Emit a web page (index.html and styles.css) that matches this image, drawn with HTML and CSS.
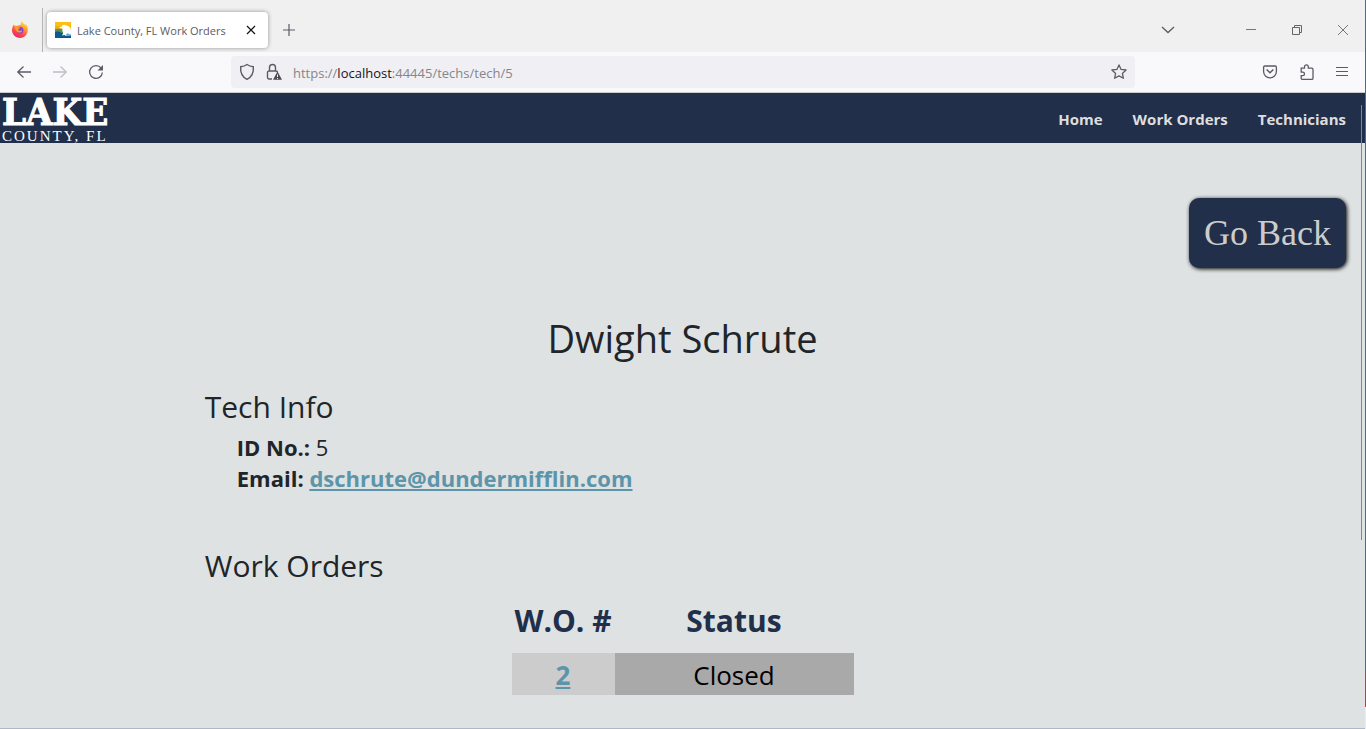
FILE: index.html
```html
<!DOCTYPE html>
<html lang="en">
<head>
<meta charset="utf-8">
<title>Lake County, FL Work Orders</title>
<link rel="stylesheet" href="styles.css">
</head>
<body>
<div class="window">
  <div class="tabstrip">
    <button class="firefox" aria-label="Firefox View">
      <svg width="18" height="18" viewBox="0 0 18 18">
        <defs>
          <linearGradient id="flame" x1=".8" y1="0" x2=".3" y2="1"><stop offset="0" stop-color="#fff04a"/><stop offset=".35" stop-color="#ffa526"/><stop offset=".7" stop-color="#ff4a45"/><stop offset="1" stop-color="#e81f78"/></linearGradient>
          <radialGradient id="globe"><stop offset="0" stop-color="#5b4fe0"/><stop offset="1" stop-color="#a33ae0"/></radialGradient>
        </defs>
        <path d="M11 0c.3 1.800 2 2.600 3 4 .4-.3.300-.8.200-1.200C16.300 4.300 17 7 16.800 9.500 16.400 14 13 17 9 17S1 13.700 1 9.300C1 6.800 2 4.500 3 3.200c0 .8.200 1.300.5 1.600C4.500 4.500 5.400 4.600 6 5 7.600 4 9.600 3.800 10 3.400 9.600 2 10 .8 11 0z" fill="url(#flame)"/>
        <circle cx="9" cy="9.200" r="3.500" fill="url(#globe)"/>
        <path d="M3.500 5.200c1.600-.6 2.800.1 3.700 1 .9.100 1.800 0 2 .600 0 .800-1.600.800-2 1.700 0 1 1.300 1.600 2.600 1.100 1.300-.4 1.700.6.700 1.300C8.200 12.400 4 11 3.500 5.200z" fill="#ff9a2b"/>
      </svg>
    </button>
    <div class="tab">
      <svg width="16" height="16" viewBox="0 0 16 16">
        <path d="M0 0h16v16H0z" fill="#fdbf12"/>
        <path d="M0 7c3-1 5-1 8 0v4H0z" fill="#57934b"/>
        <path d="M0 4.500c3-1 5 0 6.500 1.500L0 7z" fill="#f6a81b"/>
        <path d="M0 10c3-1 5 0 7 1h9v5H0z" fill="#0a5a91"/>
        <path d="M3.500 6 7 4.500c0-1.800 2.500-2.500 3.700-1.200C13 3.500 15 5 16 7.500V13l-2-1-2-.5L11 14l-1.500-1-2.500.5c.5-1.500 1.500-2 1-3.500C7 9 7.200 7.500 7.500 6.500z" fill="#fff"/>
        <path d="M11 12.500l5-.5v1.500l-5 .5z" fill="#8cc5e6"/>
      </svg>
      <span class="tab-title">Lake County, FL Work Orders</span>
      <button class="tab-close" aria-label="Close tab"><svg width="10" height="10" viewBox="0 0 10 10"><path d="M1 1l8 8M9 1L1 9" stroke="#15141a" stroke-width="1.200"/></svg></button>
    </div>
    <button class="new-tab" aria-label="New tab"><svg width="12" height="12" viewBox="0 0 12 12"><path d="M6 0v12M0 6h12" stroke="#5b5b66" stroke-width="1.200"/></svg></button>
    <div class="window-controls">
      <button aria-label="List all tabs"><svg width="14" height="14" viewBox="0 0 14 14"><path d="M1 4l6 5.500L13 4" fill="none" stroke="#5b5b66" stroke-width="1.300"/></svg></button>
      <button class="minimize" aria-label="Minimize"><svg width="10" height="10" viewBox="0 0 10 10"><path d="M0 4.500h10" stroke="#777"/></svg></button>
      <button aria-label="Restore"><svg width="10" height="10" viewBox="0 0 10 10" fill="none" stroke="#666"><path d="M.5 2.500h7v7h-7zM2.500 2.500v-2h7v7h-2"/></svg></button>
      <button aria-label="Close"><svg width="10" height="10" viewBox="0 0 10 10"><path d="M0 0l10 10M10 0L0 10" stroke="#777"/></svg></button>
    </div>
  </div>

  <div class="toolbar">
    <div class="history">
      <button aria-label="Back"><svg width="16" height="16" viewBox="0 0 16 16" fill="none" stroke="#5b5b66" stroke-width="1.300"><path d="M15 8H2M7.500 2.500L1.800 8l5.700 5.500"/></svg></button>
      <button aria-label="Forward" disabled><svg width="16" height="16" viewBox="0 0 16 16" fill="none" stroke="#bfbfc4" stroke-width="1.300"><path d="M1 8h13M8.500 2.500L14.200 8l-5.700 5.500"/></svg></button>
      <button aria-label="Reload"><svg width="16" height="16" viewBox="0 0 16 16"><path d="M13.200 4.200A6.400 6.400 0 1 0 14.400 8.500" fill="none" stroke="#5b5b66" stroke-width="1.300"/><path d="M15 1v5.500H9.500z" fill="#5b5b66"/></svg></button>
    </div>
    <div class="urlbar">
      <svg width="16" height="18" viewBox="0 0 16 18"><path d="M8 1.500c2 1.500 4 2 6.300 2.200C14.800 9 12.500 14 8 16.300 3.500 14 1.200 9 1.700 3.700 4 3.500 6 3 8 1.500z" fill="none" stroke="#5b5b66" stroke-width="1.400"/></svg>
      <svg width="16" height="18" viewBox="0 0 16 18"><path d="M6 16H3a1.500 1.500 0 0 1-1.500-1.500V9.500A1.500 1.500 0 0 1 3 8h7a1.500 1.500 0 0 1 1.500 1.500M3.500 8V4.500a3 3 0 0 1 6 0V8" fill="none" stroke="#5b5b66" stroke-width="1.400"/><path d="M11.500 8.500l4.500 8.300H7z" fill="#4a4a52"/><path d="M11.500 11.500v2.500M11.500 15v1" stroke="#f0f0f4" stroke-width="1"/></svg>
      <span class="url">https://<b>localhost</b>:44445/techs/tech/5</span>
      <button class="star" aria-label="Bookmark this page"><svg width="16" height="16" viewBox="0 0 16 16"><path d="M8 .9l2.100 4.500 5 .6-3.700 3.400 1 4.900L8 11.900l-4.400 2.400 1-4.900L.9 6l5-.6z" fill="none" stroke="#5b5b66" stroke-width="1.300" stroke-linejoin="round"/></svg></button>
    </div>
    <div class="tools">
      <button aria-label="Save to Pocket"><svg width="16" height="16" viewBox="0 0 16 16" fill="none" stroke="#5b5b66" stroke-width="1.300"><path d="M2.800 2h10.400q1.200 0 1.200 1.200V7.500a6.400 6.400 0 0 1-12.800 0V3.200Q1.600 2 2.800 2z"/><path d="M4.600 5.500L8 8.800l3.400-3.300" stroke-width="1.500"/></svg></button>
      <button aria-label="Extensions"><svg width="16" height="16" viewBox="0 0 16 16"><path d="M2.200 4.200h3.300V2.800a1.900 1.900 0 0 1 3.800 0v1.400h3.500q1.200 0 1.200 1.200v8.800q0 1.200-1.200 1.200H3.400q-1.200 0-1.200-1.200v-2.500h1.500a1.700 1.700 0 0 0 0-3.600H2.200z" fill="none" stroke="#5b5b66" stroke-width="1.300"/></svg></button>
      <button aria-label="Open application menu"><svg width="12" height="12" viewBox="0 0 12 12"><path d="M0 1.500h12M0 5.500h12M0 9.500h12" stroke="#5b5b66" stroke-width="1"/></svg></button>
    </div>
  </div>

  <div class="page">
    <header class="site-header">
      <a class="logo" href="#"><span class="logo-name">LAKE</span><span class="logo-place">COUNTY, FL</span></a>
      <nav class="site-nav"><a href="#">Home</a><a href="#">Work Orders</a><a href="#">Technicians</a></nav>
    </header>
    <div class="actions"><button class="go-back">Go Back</button></div>
    <main class="content">
      <h1>Dwight Schrute</h1>
      <section class="info">
        <h2>Tech Info</h2>
        <p><strong>ID No.:</strong> 5</p>
        <p><strong>Email: <a href="mailto:dschrute@dundermifflin.com">dschrute@dundermifflin.com</a></strong></p>
      </section>
      <section class="orders">
        <h2>Work Orders</h2>
        <table>
          <thead><tr><th class="number">W.O. #</th><th class="status">Status</th></tr></thead>
          <tbody><tr><td class="number"><a href="#">2</a></td><td class="status">Closed</td></tr></tbody>
        </table>
      </section>
    </main>
    <div class="scroll-thumb"></div>
  </div>
</div>
<div class="desktop-edge"></div>
</body>
</html>
```
FILE: styles.css
```css
* { box-sizing: border-box; }
body {
  margin: 0;
  min-height: 100vh;
  display: flex;
  font-family: "Open Sans", "Noto Sans", sans-serif;
  color: #212529;
  background: #dee2e3;
}
button { margin: 0; padding: 0; border: 0; background: none; font: inherit; color: inherit; }
svg { display: block; flex: none; }
.window { flex: 1; min-width: 0; display: flex; flex-direction: column; border-bottom: 1px solid #b0b7c6; }
.desktop-edge { width: 1px; background: linear-gradient(#56658c 0 92%, #a04a46 92% 97%, #e6eef2 97%); }

.tabstrip { display: flex; align-items: center; height: 52px; padding-top: 8px; background: #f0f0f0; }
.firefox { align-self: stretch; width: 43px; display: flex; align-items: center; padding-left: 11px; border-right: 1px solid #b4b4b4; }
.tab {
  display: flex; align-items: center; width: 221px; height: 36px; margin-left: 4px; padding: 0 8px;
  background: #fff; border-radius: 4px; box-shadow: 0 0 4px rgba(0, 0, 0, .4);
}
.tab-title { flex: 1; margin-left: 6px; font-size: 11px; color: #5b5b66; white-space: nowrap; }
.tab-close { padding: 4px; }
.new-tab { margin-left: 15px; }
.window-controls { display: flex; margin-left: auto; margin-right: -1px; }
.window-controls button { display: flex; justify-content: center; width: 46px; align-items: center; }
.window-controls .minimize { margin-left: 37px; }

.toolbar { display: flex; align-items: center; height: 41px; background: #f9f9fb; border-bottom: 1px solid #ccccca; }
.history { display: flex; gap: 20px; width: 231px; padding-left: 16px; }
.urlbar { flex: 1; display: flex; align-items: center; gap: 11px; height: 32px; padding: 0 8px; background: #f0f0f4; border-radius: 4px; }
.url { padding-top: 2px; font-size: 13px; color: #85858c; }
.url b { font-weight: 400; color: #15141a; }
.star { margin-left: auto; }
.tools { display: flex; align-items: center; gap: 21px; width: 230px; padding-right: 17px; justify-content: flex-end; }

.page { position: relative; flex: 1; background: #dee2e3; }
.site-header { display: flex; align-items: center; justify-content: space-between; height: 50px; padding: 0 19px 0 2px; background: #212f4a; }
.logo { display: flex; flex-direction: column; color: #fff; text-decoration: none; }
.logo-name { font: bold 38px/37px "DejaVu Serif Condensed", "DejaVu Serif", serif; font-stretch: condensed; -webkit-text-stroke: 1px #fff; }
.logo-place { font: 15px/13px "Liberation Serif", serif; letter-spacing: 2px; white-space: nowrap; }
.site-nav { display: flex; gap: 30px; padding-top: 2px; }
.site-nav a { font-size: 15px; font-weight: 700; color: #dedede; text-decoration: none; }
.actions { display: flex; justify-content: flex-end; padding: 55px 19px 0 0; }
.go-back {
  height: 70px; padding: 0 15px; font: 36px/40px "Liberation Serif", serif; color: #ccc;
  background: #212f4a; border-radius: 10px; box-shadow: 1px 1px 4px #000;
}
.content { width: 70%; margin: 0 auto; padding-top: 46px; }
h1, h2, p { margin: 0; font-weight: 400; }
h1 { font-size: 38px; line-height: 48px; text-align: center; }
h2 { font-size: 30px; line-height: 38px; }
.info { padding-top: 26px; }
.info p { padding-left: 32px; font-size: 22px; line-height: 31px; }
.info h2 { margin-bottom: 6px; }
.content a { color: #5c95a9; font-weight: 700; }
.orders { padding-top: 53px; }
table { margin: 12px auto 0; border-collapse: collapse; font-size: 26px; text-align: center; }
th { height: 56px; padding: 0 0 8px; font-size: 30px; line-height: 38px; color: #212f4a; }
td { height: 42px; padding: 2px 0 0; line-height: 38px; }
.number { width: 103px; white-space: nowrap; }
.status { width: 239px; }
td.number { background: #ccc; }
td.status { background: #a9a9a9; color: #000; }
.scroll-thumb { position: absolute; right: 3px; top: 12px; width: 1px; height: 435px; background: #82878b; }
```
